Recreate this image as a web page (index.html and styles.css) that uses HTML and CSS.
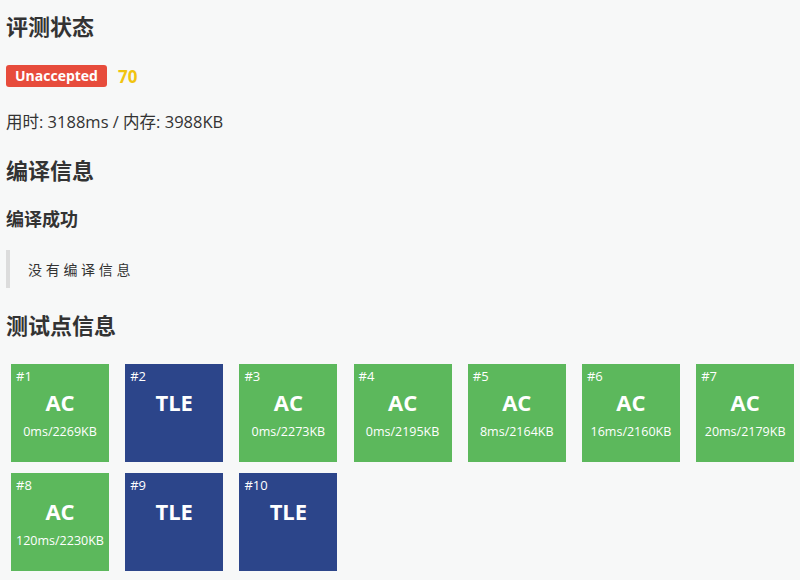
FILE: index.html
```html
<!DOCTYPE html>
<html lang="zh">
<head>
<meta charset="utf-8">
<link rel="stylesheet" href="styles.css">
</head>
<body>
<main class="page">
  <h1 class="title first">评测状态</h1>
  <div class="status-row">
    <span class="badge">Unaccepted</span>
    <span class="score">70</span>
  </div>
  <p class="usage">用时: 3188ms / 内存: 3988KB</p>
  <h1 class="title compile">编译信息</h1>
  <h2 class="subtitle">编译成功</h2>
  <blockquote class="quote">没有编译信息</blockquote>
  <h1 class="title tests">测试点信息</h1>
  <div class="cases">
    <div class="case ac"><span class="num">#1</span><span class="res">AC</span><span class="meta">0ms/2269KB</span></div>
    <div class="case tle"><span class="num">#2</span><span class="res">TLE</span><span class="meta"></span></div>
    <div class="case ac"><span class="num">#3</span><span class="res">AC</span><span class="meta">0ms/2273KB</span></div>
    <div class="case ac"><span class="num">#4</span><span class="res">AC</span><span class="meta">0ms/2195KB</span></div>
    <div class="case ac"><span class="num">#5</span><span class="res">AC</span><span class="meta">8ms/2164KB</span></div>
    <div class="case ac"><span class="num">#6</span><span class="res">AC</span><span class="meta">16ms/2160KB</span></div>
    <div class="case ac"><span class="num">#7</span><span class="res">AC</span><span class="meta">20ms/2179KB</span></div>
    <div class="case ac"><span class="num">#8</span><span class="res">AC</span><span class="meta">120ms/2230KB</span></div>
    <div class="case tle"><span class="num">#9</span><span class="res">TLE</span><span class="meta"></span></div>
    <div class="case tle"><span class="num">#10</span><span class="res">TLE</span><span class="meta"></span></div>
  </div>
</main>
</body>
</html>
```
FILE: styles.css
```css
html, body {
  margin: 0;
  padding: 0;
  background: #f7f8f8;
}
body {
  font-family: "Open Sans", "Noto Sans CJK SC", sans-serif;
  color: #333;
}
.page {
  padding: 0 6px;
}
.title {
  font-size: 22px;
  line-height: 26px;
  font-weight: 700;
  margin: 0;
  color: #333;
}
.first { margin-top: 13px; }
.status-row {
  display: flex;
  align-items: center;
  gap: 11px;
  margin-top: 26px;
  height: 22px;
}
.badge {
  background: #e74c3c;
  color: #fff;
  font-weight: 700;
  font-size: 14px;
  line-height: 22px;
  height: 22px;
  width: 101px;
  text-align: center;
  border-radius: 3px;
}
.score {
  color: #f1c40f;
  font-weight: 700;
  font-size: 17px;
}
.usage {
  margin: 23px 0 0;
  font-size: 16.5px;
  line-height: 24px;
}
.compile { margin-top: 23px; }
.subtitle {
  margin: 25px 0 0;
  font-size: 18px;
  line-height: 22px;
  font-weight: 700;
}
.quote {
  margin: 20px 0 0;
  height: 38px;
  border-left: 4px solid #dcdcdc;
  padding: 0 0 0 18px;
  display: flex;
  align-items: center;
  font-size: 14px;
  letter-spacing: 3.7px;
  color: #333;
}
.tests { margin-top: 24px; }
.cases {
  display: grid;
  grid-template-columns: repeat(7, 98px);
  grid-auto-rows: 98px;
  column-gap: 16.2px;
  row-gap: 11px;
  margin-top: 26px;
  padding-left: 5px;
}
.case {
  position: relative;
  color: #fff;
  display: flex;
  flex-direction: column;
  align-items: center;
}
.ac { background: #5cb85c; }
.tle { background: #2c458a; }
.num {
  position: absolute;
  left: 5px;
  top: 3px;
  font-size: 13px;
}
.res {
  margin-top: 23px;
  font-size: 22px;
  font-weight: 700;
  line-height: 30px;
}
.meta {
  margin-top: 6px;
  font-size: 12.5px;
  line-height: 18px;
}
```
